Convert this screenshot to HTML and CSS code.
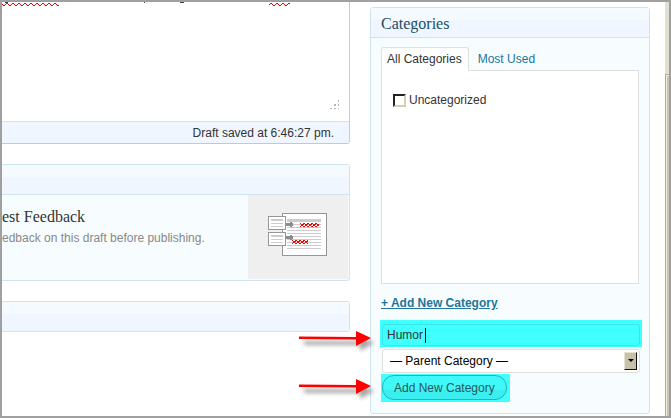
FILE: index.html
```html
<!DOCTYPE html>
<html lang="en">
<head>
  <meta charset="utf-8">
  <meta name="viewport" content="width=device-width, initial-scale=1">
  <title>Edit Post</title>
  <link rel="stylesheet" href="styles.css">
</head>
<body>
  <div class="window">
    <main class="main">
      <section class="editor">
        <textarea class="content" aria-label="Post content"></textarea>
        <svg class="spelling" width="300" height="4" viewBox="0 0 300 4" shape-rendering="crispEdges" aria-hidden="true">
          <defs>
            <pattern id="wave" width="6" height="4" patternUnits="userSpaceOnUse">
              <path d="M0 2h1v1h-1zM1 3h2v1h-2zM3 2h1v1h-1zM4 1h2v1h-2z" fill="#f00000"/>
            </pattern>
          </defs>
          <rect width="57" height="4" fill="url(#wave)"/>
          <rect x="267" width="21" height="4" fill="url(#wave)"/>
          <path d="M3 0h3v1h-3zM142 0h1v1h-1zM178 0h4v1h-4z" fill="#444"/>
        </svg>
        <svg class="grip" width="9" height="9" viewBox="0 0 9 9" shape-rendering="crispEdges" aria-hidden="true">
          <path d="M8 0h1v2h-1zM4 4h2v2h-2zM8 4h1v2h-1zM0 8h2v1h-2zM4 8h2v1h-2zM8 8h1v1h-1z" fill="#b5b5b5"/>
        </svg>
        <div class="status">Draft saved at 6:46:27 pm.</div>
      </section>

      <section class="postbox">
        <div class="box-title"></div>
        <div class="feedback">
          <div class="feedback-text">
            <h4>est Feedback</h4>
            <p>edback on this draft before publishing.</p>
          </div>
          <div class="feedback-icon">
            <svg width="59" height="43" viewBox="0 0 59 43" shape-rendering="crispEdges" aria-hidden="true">
              <defs>
                <pattern id="scribble" width="4" height="4" patternUnits="userSpaceOnUse">
                  <path d="M0 0h1v1h-1zM3 0h1v1h-1zM1 1h2v1h-2zM1 2h2v1h-2zM0 3h1v1h-1zM3 3h1v1h-1zM3 1h1v1h-1z" fill="#f00"/>
                </pattern>
              </defs>
              <rect x="14.5" y=".5" width="44" height="42" fill="#fff" stroke="#969696"/>
              <path d="M19 6h34v3h-34z" fill="#ccc"/>
              <path d="M19 11.5h34M19 14.5h34M19 17.5h34M19 20.5h34M19 23.5h34M19 26.5h34M19 29.5h34M19 32.5h34M19 35.5h34" stroke="#ccc"/>
              <rect x=".5" y="3.5" width="17" height="13" fill="#fff" stroke="#969696"/>
              <rect x=".5" y="19.5" width="17" height="13" fill="#fff" stroke="#969696"/>
              <path d="M3 6h12v2h-12zM3 10h12v1h-12zM3 13h12v1h-12zM3 22h12v2h-12zM3 26h12v1h-12zM3 29h12v1h-12z" fill="#ccc"/>
              <path d="M18 10h4v-1h2v1h1v3h-1v1h-2v-1h-4zM18 23h4v-1h2v1h1v3h-1v1h-2v-1h-4z" fill="#8c8c8c"/>
              <rect width="19" height="4" transform="translate(32 10)" fill="url(#scribble)"/>
              <rect width="16" height="4" transform="translate(24 27)" fill="url(#scribble)"/>
            </svg>
          </div>
        </div>
      </section>

      <section class="postbox">
        <div class="box-title"></div>
      </section>
    </main>

    <aside class="side">
      <section class="postbox categories">
        <h3 class="box-title">Categories</h3>
        <div class="inside">
          <nav class="tabs">
            <a class="tab active" href="#all">All Categories</a>
            <a class="tab" href="#used">Most Used</a>
          </nav>
          <div class="panel" id="all">
            <label class="check"><input type="checkbox"> Uncategorized</label>
          </div>
          <a class="add-toggle" href="#add">+ Add New Category</a>
          <form class="add-form" id="add">
            <div class="mark name-row">
              <input class="name" type="text" value="Humor" aria-label="New category name">
              <span class="caret"></span>
            </div>
            <div class="parent-row">
              <select class="parent" aria-label="Parent category">
                <option>— Parent Category —</option>
              </select>
              <span class="drop"></span>
            </div>
            <div class="mark button-row">
              <button class="button" type="button">Add New Category</button>
            </div>
            <svg class="arrow arrow-name" width="84" height="36" viewBox="0 0 84 36" aria-hidden="true">
              <path class="shadow" d="M5 13h56V8l14 7-14 8v-6H5z"/>
              <path d="M0 8.500l57 .5V3l15 7-15 8v-6.500L0 11z" fill="#f00"/>
            </svg>
            <svg class="arrow arrow-button" width="84" height="36" viewBox="0 0 84 36" aria-hidden="true">
              <path class="shadow" d="M5 13h56V8l14 7-14 8v-6H5z"/>
              <path d="M0 8.500l57 .5V3l15 7-15 8v-6.500L0 11z" fill="#f00"/>
            </svg>
          </form>
        </div>
      </section>
    </aside>

    <div class="scrollbar"><div class="thumb"></div></div>
  </div>
</body>
</html>
```

FILE: styles.css
```css
:root {
  --frame: #a0a0a0;
  --line: #d0e4ee;
  --gray-line: #dfdfdf;
  --box-bg: #f7fdfe;
  --text: #333;
  --link: #21759b;
  --mark: #40ffff;
}

* {
  box-sizing: border-box;
}

body {
  margin: 0;
  background: #fff;
  color: var(--text);
  font: 12px/16px "Liberation Sans", Arial, sans-serif;
}

h3, h4, p {
  margin: 0;
  font-weight: normal;
}

input, select, button, textarea {
  margin: 0;
  font: inherit;
  color: inherit;
}

a {
  color: var(--link);
}

.window {
  display: flex;
  min-height: 100vh;
  border: 2px solid var(--frame);
}

.main {
  flex: 1;
  min-width: 0;
  display: flex;
  flex-direction: column;
}

/* Editor */
.editor {
  position: relative;
  margin-bottom: 20px;
  border-right: 1px solid #ccc;
  border-bottom: 1px solid #b9ccd8;
  border-bottom-right-radius: 3px;
}

.content {
  display: block;
  width: 100%;
  height: 119px;
  padding: 8px;
  border: 0;
  outline: 0;
  resize: none;
}

.spelling {
  position: absolute;
  top: 0;
  left: 0;
}

.grip {
  position: absolute;
  right: 10px;
  bottom: 34px;
}

.status {
  padding: 3px 15px 2px;
  border-top: 1px solid var(--gray-line);
  background: #eff6ff;
  text-align: right;
}

/* Boxes */
.postbox {
  margin-bottom: 20px;
  border: 1px solid var(--line);
  border-radius: 3px;
  background: var(--box-bg);
}

.main .postbox {
  border-left: 0;
  border-radius: 0 3px 3px 0;
}

.box-title {
  height: 29px;
  padding: 8px 10px 5px;
  background: linear-gradient(#f5fafe 0, #f5fafe 40%, #eff6ff 42%);
  color: #174f69;
  font: 16px/16px "Liberation Serif", serif;
}

.feedback {
  display: flex;
  padding: 0 1px 1px 0;
  border-top: 1px solid var(--line);
}

.feedback-text {
  flex: 1;
  min-width: 0;
  display: flex;
  flex-direction: column;
  gap: 5px;
  padding-top: 14px;
}

.feedback-text h4 {
  font: 16px/16px "Liberation Serif", serif;
}

.feedback-text p {
  color: #888;
}

.feedback-icon {
  width: 100px;
  height: 84px;
  padding: 18px 20px;
  background: #efefef;
}

/* Categories */
.side {
  width: 280px;
  margin: 5px 15px 0 20px;
}

.categories {
  margin-bottom: 0;
}

.inside {
  padding: 9px 10px 11px;
  border-top: 1px solid var(--line);
}

.tabs {
  display: flex;
  gap: 3px;
}

.tab {
  margin-bottom: -1px;
  padding: 3px 6px 3px 5px;
  border: 1px solid transparent;
  text-decoration: none;
}

.tab.active {
  border-color: var(--gray-line);
  border-bottom-color: #fff;
  border-radius: 3px 3px 0 0;
  background: #fff;
  color: var(--text);
  z-index: 1;
}

.panel {
  height: 214px;
  padding: 21px 11px;
  border: 1px solid var(--gray-line);
  background: #fff;
}

.check {
  display: flex;
  align-items: center;
  gap: 3px;
}

.check input {
  appearance: none;
  width: 13px;
  height: 13px;
  border: 2px solid;
  border-color: #222 #d4d0b8 #d4d0b8 #222;
  background: #fff;
}

.add-toggle {
  display: inline-block;
  margin: 11px 0 9px;
  font-weight: bold;
}

.add-form {
  position: relative;
  display: flex;
  flex-direction: column;
  align-items: stretch;
}

.mark {
  background: var(--mark);
}

.name-row {
  position: relative;
  margin: 0 -3px 0 -1px;
  padding: 4px 2px 1px;
}

.name {
  display: block;
  width: 100%;
  height: 22px;
  padding: 0 4px;
  border: 1px solid #38e6e8;
  border-radius: 3px;
  outline: 0;
  background: transparent;
}

.caret {
  position: absolute;
  left: 45px;
  top: 8px;
  width: 1px;
  height: 15px;
  background: #111;
}

.parent-row {
  position: relative;
  margin: 2px -1px 1px 1px;
}

.parent {
  appearance: none;
  display: block;
  width: 100%;
  height: 24px;
  padding: 0 7px;
  border: 1px solid var(--gray-line);
  border-radius: 3px;
  background: #fff;
  color: #000;
}

.drop {
  position: absolute;
  top: 3px;
  right: 3px;
  width: 13px;
  height: 18px;
  border: 1px solid;
  border-color: #e4e2d2 #111 #111 #e4e2d2;
  background: #c5c2a8;
  pointer-events: none;
}

.drop::after {
  content: "";
  position: absolute;
  top: 6px;
  left: 3px;
  border: 3px solid transparent;
  border-top-color: #000;
  border-bottom: 0;
}

.button-row {
  align-self: flex-start;
  padding: 1px 3px 2px 1px;
}

.button {
  display: block;
  height: 25px;
  padding: 0 11px;
  border: 1px solid #20b4b8;
  border-radius: 12px;
  background: linear-gradient(#40f8f8 0, #40f8f8 58%, #3ceef0 60%);
  color: #26585c;
}

/* Callout arrows */
.arrow {
  position: absolute;
  left: -82px;
  pointer-events: none;
}

.arrow-name {
  top: 8px;
}

.arrow-button {
  top: 56px;
}

.shadow {
  fill: #000;
  opacity: 0.35;
  filter: blur(2px);
}

/* Scrollbar */
.scrollbar {
  width: 4px;
  padding-top: 72px;
  background: #e2e0d2;
  display: flex;
}

.thumb {
  flex: 1;
  border: 1px solid #aeab92;
  border-width: 1px 0 0 1px;
  background: #c8c5ac;
  box-shadow: inset 1px 1px #efeee2;
}
```
